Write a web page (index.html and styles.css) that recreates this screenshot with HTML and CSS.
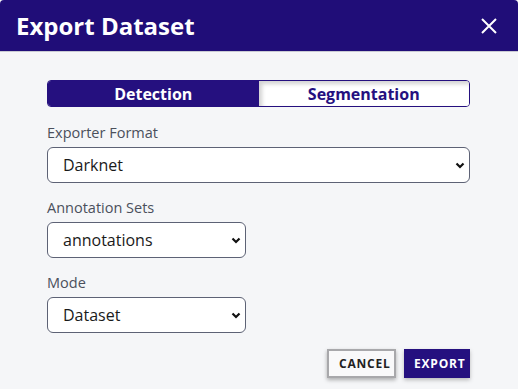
FILE: index.html
```html
<!DOCTYPE html>
<html>
<head>
<meta charset="utf-8">
<link rel="stylesheet" href="styles.css">
</head>
<body>
<div class="modal">
  <div class="header">
    <h1 class="title">Export Dataset</h1>
    <button class="close" aria-label="Close">
      <svg width="16" height="16" viewBox="0 0 16 16"><path d="M1 1L15 15M15 1L1 15" stroke="#fff" stroke-width="2" fill="none"/></svg>
    </button>
  </div>
  <div class="body">
    <div class="toggle">
      <button class="tab active">Detection</button>
      <button class="tab">Segmentation</button>
    </div>
    <div class="field">
      <label class="label">Exporter Format</label>
      <div class="select wide"><span>Darknet</span><svg class="chev" width="10" height="7" viewBox="0 0 10 7"><path d="M1.5 1.5L5 5L8.5 1.5" stroke="#111" stroke-width="2.2" fill="none"/></svg></div>
    </div>
    <div class="field">
      <label class="label">Annotation Sets</label>
      <div class="select narrow"><span>annotations</span><svg class="chev" width="10" height="7" viewBox="0 0 10 7"><path d="M1.5 1.5L5 5L8.5 1.5" stroke="#111" stroke-width="2.2" fill="none"/></svg></div>
    </div>
    <div class="field">
      <label class="label">Mode</label>
      <div class="select narrow"><span>Dataset</span><svg class="chev" width="10" height="7" viewBox="0 0 10 7"><path d="M1.5 1.5L5 5L8.5 1.5" stroke="#111" stroke-width="2.2" fill="none"/></svg></div>
    </div>
    <div class="actions">
      <button class="btn cancel">CANCEL</button>
      <button class="btn export">EXPORT</button>
    </div>
  </div>
</div>
</body>
</html>
```
FILE: styles.css
```css
* { box-sizing: border-box; }
html, body { margin: 0; padding: 0; background: #f5f6f8; }
body { font-family: "Open Sans", "Noto Sans", sans-serif; }
.modal { width: 518px; height: 389px; background: #f5f6f8; border-radius: 4px 4px 0 0; overflow: hidden; }
.header { height: 52px; background: #200d78; border-bottom: 1px solid #c9cad3; display: flex; align-items: center; justify-content: space-between; padding: 0 21px 0 16px; }
.title { margin: 0; color: #fff; font-size: 24px; font-weight: 700; letter-spacing: 0; line-height: 1; }
.close { background: none; border: 0; padding: 0; width: 16px; height: 16px; display: flex; }
.body { padding: 28px 48px 0 47px; display: flex; flex-direction: column; }
.toggle { display: flex; height: 27px; border: 1px solid #25107f; border-radius: 4px; overflow: hidden; margin-bottom: 16px; }
.tab { flex: 1; border: 0; margin: 0; font-family: inherit; font-size: 16px; font-weight: 700; background: #fff; color: #25107f; box-shadow: inset 3px 3px 4px rgba(0,0,0,0.18); padding: 0; }
.tab.active { background: #25107f; color: #fff; box-shadow: none; }
.field { display: flex; flex-direction: column; margin-bottom: 15px; }
.label { font-size: 14.5px; color: #4b505c; line-height: 19px; margin-bottom: 5px; }
.select { height: 36px; border: 1px solid #5d6275; border-radius: 6px; background: #fff; display: flex; align-items: center; justify-content: space-between; padding: 0 4px 0 15px; font-size: 16px; color: #1a1a1a; }
.wide { width: 423px; }
.narrow { width: 199px; }
.actions { display: flex; justify-content: flex-end; gap: 8px; margin-top: 1px; }
.btn { font-family: inherit; font-size: 12px; font-weight: 700; letter-spacing: 0.8px; height: 29px; padding: 0 10px; border-radius: 0; }
.cancel { background: #f9f9fa; color: #222; border: 2px solid #a8a8ab; box-shadow: 0 2px 4px rgba(0,0,0,0.3); width: 69px; }
.export { background: #25107f; color: #fff; border: 0; box-shadow: 0 2px 4px rgba(0,0,0,0.25); width: 66px; }
```
